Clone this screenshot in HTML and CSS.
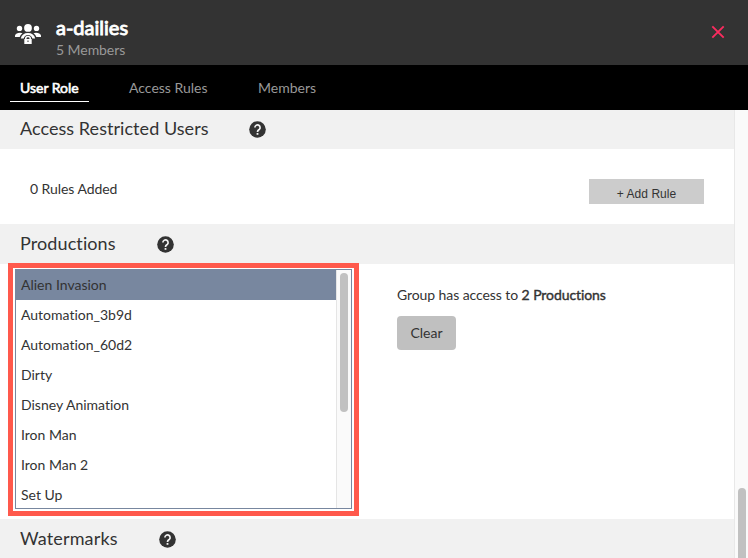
FILE: index.html
```html
<!DOCTYPE html>
<html lang="en">
<head>
<meta charset="utf-8">
<title>a-dailies</title>
<link rel="stylesheet" href="styles.css">
</head>
<body>
<svg width="0" height="0" class="defs" aria-hidden="true">
  <symbol id="help" viewBox="0 0 17 17">
    <circle cx="8.5" cy="8.5" r="8.3" fill="#333"/>
    <path d="M5.900 6.500a2.600 2.600 0 1 1 4.400 1.900c-1.100.9-1.800 1.200-1.800 2.500" fill="none" stroke="#f1f1f1" stroke-width="1.700"/>
    <rect x="7.600" y="12" width="1.800" height="1.800" fill="#f1f1f1"/>
  </symbol>
</svg>
<div class="app">
  <header class="header">
    <svg class="group-icon" viewBox="0 0 26 20" fill="#fff">
      <circle cx="4.500" cy="4.400" r="2.700"/>
      <circle cx="21.500" cy="4.400" r="2.700"/>
      <circle cx="13" cy="3.900" r="3.900"/>
      <path d="M0 13v-1.500Q1 8.800 5 8.800q1.500 0 2.500.5Q5.300 10.800 4.700 13z"/>
      <path d="M26 13v-1.500Q25 8.800 21 8.800q-1.500 0-2.500.5 2.200 1.500 2.800 3.700z"/>
      <path d="M5.800 14.500Q7 9 13 9t7.200 5.500h-2.900Q16.500 11 13 11t-4.300 3.500z"/>
      <path d="M10 15v-.5a3 2.700 0 0 1 6 0v.5h.7v5H9.300v-5zm1.500 0h3v-.4a1.500 1.300 0 0 0-3 0zm1 1.500v1.500h1v-1.500z" fill-rule="evenodd"/>
    </svg>
    <div class="title">
      <h1>a-dailies</h1>
      <p>5 Members</p>
    </div>
    <svg class="close" viewBox="0 0 14 14"><path d="M1.300 1.300l11.400 11.400M12.700 1.300L1.300 12.700" stroke="#fb2c5f" stroke-width="1.900"/></svg>
  </header>
  <nav class="tabs">
    <a class="tab active">User Role</a>
    <a class="tab rules">Access Rules</a>
    <a class="tab members">Members</a>
  </nav>
  <div class="body">
    <main class="content">
      <h2 class="section restricted"><span>Access Restricted Users</span><svg><use href="#help"/></svg></h2>
      <div class="rule-row">
        <span class="rule-count">0 Rules Added</span>
        <button class="add">+ Add Rule</button>
      </div>
      <h2 class="section productions"><span>Productions</span><svg><use href="#help"/></svg></h2>
      <div class="production-row">
        <div class="frame">
          <div class="list">
            <ul>
              <li class="selected">Alien Invasion</li>
              <li>Automation_3b9d</li>
              <li>Automation_60d2</li>
              <li>Dirty</li>
              <li>Disney Animation</li>
              <li>Iron Man</li>
              <li>Iron Man 2</li>
              <li>Set Up</li>
            </ul>
            <div class="list-track"><div class="list-thumb"></div></div>
          </div>
        </div>
        <div class="access">
          <p>Group has access to <b>2 Productions</b></p>
          <button class="clear">Clear</button>
        </div>
      </div>
      <h2 class="section watermarks"><span>Watermarks</span><svg><use href="#help"/></svg></h2>
    </main>
    <div class="page-track"><div class="page-thumb"></div></div>
  </div>
</div>
</body>
</html>
```
FILE: styles.css
```css
* { box-sizing: border-box; }
body { margin: 0; font: 14px/20px Lato, sans-serif; color: #333; background: #fff; font-variant-ligatures: none; }
h1, h2, p, ul { margin: 0; padding: 0; }
button { border: 0; padding: 0; color: #333; }
.defs { display: none; }
.app { height: 558px; overflow: hidden; display: flex; flex-direction: column; }
.header { height: 65px; background: #333; display: flex; align-items: flex-start; padding-left: 15px; padding-right: 23px; }
.group-icon { width: 26px; height: 20px; margin-top: 24px; }
.title { margin-left: 15px; padding-top: 14px; flex: 1; }
.title h1 { font-size: 20px; line-height: 26px; font-weight: 400; color: #fff; -webkit-text-stroke: .9px #fff; }
.title p { color: #999; line-height: 20px; letter-spacing: -.06px; }
.close { width: 14px; height: 14px; margin-top: 25px; }
.tabs { height: 45px; background: #000; display: flex; padding: 8px 10px; }
.tab { height: 29px; line-height: 30px; color: #999; white-space: nowrap; }
.active { width: 79px; padding-left: 10px; color: #fff; border-bottom: 1px solid #fff; -webkit-text-stroke: .6px #fff; }
.rules { margin-left: 40px; width: 129px; }
.body { flex: 1; min-height: 0; display: flex; }
.content { flex: 1; min-width: 0; }
.section { height: 40px; background: #f1f1f1; font-size: 18px; font-weight: 400; display: flex; align-items: center; padding-left: 20px; white-space: nowrap; }
.section span { padding-bottom: 2px; letter-spacing: .05px; }
.section svg { width: 17px; height: 17px; flex: none; }
.restricted { height: 39px; }
.restricted span { width: 229px; padding-bottom: 3px; }
.productions span { width: 136.5px; letter-spacing: .1px; }
.watermarks span { width: 139px; letter-spacing: .15px; }
.rule-row { height: 75px; display: flex; justify-content: space-between; align-items: flex-start; padding: 30px 30px 0; }
.rule-count { letter-spacing: -.06px; }
.add { width: 115px; height: 25px; background: #ccc; font: 12px/25px "Liberation Sans", sans-serif; padding-top: 3px; letter-spacing: .06px; }
.production-row { height: 255px; display: flex; padding-left: 8px; }
.frame { width: 351px; height: 253px; margin-top: -1px; border: 5px solid #ff594c; padding: 1px 2px 2px; background: #fff; }
.list { width: 337px; height: 240px; border: 1px solid #78879f; display: flex; }
.list ul { flex: 1; list-style: none; }
.list li { height: 30px; line-height: 30px; padding-left: 5px; }
.list .selected { background: #78879f; }
.list-track { width: 15px; background: #fafafa; border-left: 1px solid #e5e5e5; padding: 3px 3px 0; }
.list-thumb { width: 8px; height: 139px; border-radius: 4px; background: #c1c1c1; }
.access { padding: 21px 0 0 38px; }
.access p { letter-spacing: -.08px; }
.access b { font-weight: 400; -webkit-text-stroke: .4px #333; }
.clear { display: block; width: 59px; height: 34px; margin-top: 11px; border-radius: 4px; background: #c0c0c0; font: 14px/34px Lato, sans-serif; }
.page-track { width: 14px; background: #fafafa; border-left: 1px solid #e8e8e8; padding: 378px 2px 0 3px; }
.page-thumb { width: 8px; height: 80px; border-radius: 4px 4px 0 0; background: #c1c1c1; }
```
